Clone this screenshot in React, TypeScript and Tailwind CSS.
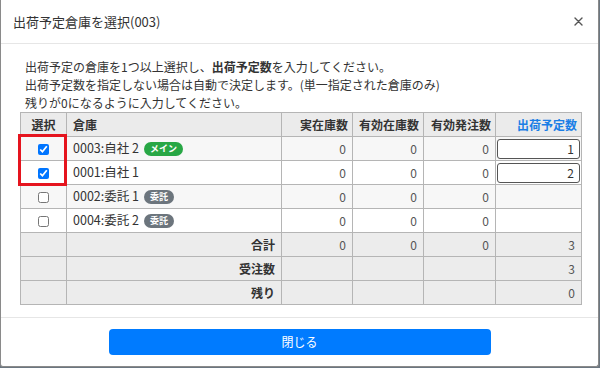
import React from "react";

type Row = {
  code: string;
  badge?: { label: string; color: string };
  checked: boolean;
  qty?: string;
};

const rows: Row[] = [
  { code: "0003:自社 2", badge: { label: "メイン", color: "bg-[#28a745]" }, checked: true, qty: "1" },
  { code: "0001:自社 1", checked: true, qty: "2" },
  { code: "0002:委託 1", badge: { label: "委託", color: "bg-[#6c757d]" }, checked: false },
  { code: "0004:委託 2", badge: { label: "委託", color: "bg-[#6c757d]" }, checked: false },
];

const cell = "h-[24px] border border-[#b5b5b5] px-[6px] py-0 whitespace-nowrap";

const App = () => {
  return (
    <div
      className="w-[600px] h-[368px] bg-[#6b7680] overflow-hidden"
      style={{ fontFamily: '"Noto Sans CJK JP", "Noto Sans", sans-serif' }}
    >
      <div className="w-[599px] h-[367px] bg-white border-l border-r border-b border-[#8a8a8a] rounded-b-[3px] flex flex-col text-[#333]">
        <div className="h-[44px] shrink-0 flex items-center justify-between pl-[12px] pr-[15px] border-b border-[#e6e6e6]">
          <span className="text-[13px] leading-none">出荷予定倉庫を選択(003)</span>
          <svg width="9" height="9" viewBox="0 0 9 9" className="text-[#555]">
            <path d="M1 1L8 8M8 1L1 8" stroke="currentColor" strokeWidth="1.4" strokeLinecap="round" />
          </svg>
        </div>

        <div className="px-[19px] pt-[14px] pb-[12px] border-b border-[#e6e6e6]">
          <div className="pl-[5px] text-[12px] leading-[18px]">
            <p>
              出荷予定の倉庫を1つ以上選択し、<span className="font-bold">出荷予定数</span>を入力してください。
            </p>
            <p>出荷予定数を指定しない場合は自動で決定します。(単一指定された倉庫のみ)</p>
            <p>残りが0になるように入力してください。</p>
          </div>

          <div className="relative w-[562px]">
            <table className="w-full table-fixed border-collapse border border-[#666] text-[12px] leading-none">
              <colgroup>
                <col className="w-[46px]" />
                <col className="w-[215px]" />
                <col className="w-[71px]" />
                <col className="w-[71px]" />
                <col className="w-[72px]" />
                <col />
              </colgroup>
              <thead>
                <tr className="bg-[#ebebeb] font-bold">
                  <th className={`${cell} text-center`}>選択</th>
                  <th className={`${cell} text-left`}>倉庫</th>
                  <th className={`${cell} !px-[4px] text-right`}>実在庫数</th>
                  <th className={`${cell} !px-[4px] text-right`}>有効在庫数</th>
                  <th className={`${cell} !px-[4px] text-right`}>有効発注数</th>
                  <th className={`${cell} !px-[4px] text-right text-[#1a7ee6]`}>出荷予定数</th>
                </tr>
              </thead>
              <tbody>
                {rows.map((r, i) => (
                  <tr key={r.code} className={i % 2 === 0 ? "bg-[#f7f7f7]" : "bg-white"}>
                    <td className={`${cell} text-center`}>
                      <input
                        type="checkbox"
                        defaultChecked={r.checked}
                        className="w-[11px] h-[11px] m-0 align-middle"
                      />
                    </td>
                    <td className={cell}>
                      <span className="flex items-center gap-[5px] text-[12.5px]">
                        {r.code}
                        {r.badge && (
                          <span
                            className={`${r.badge.color} text-white text-[9px] font-bold rounded-full px-[6px] h-[14px] flex items-center`}
                          >
                            {r.badge.label}
                          </span>
                        )}
                      </span>
                    </td>
                    <td className={`${cell} text-right text-[#555]`}>0</td>
                    <td className={`${cell} text-right text-[#555]`}>0</td>
                    <td className={`${cell} text-right text-[#555]`}>0</td>
                    <td className={`${cell} !px-[1px]`}>
                      {r.qty && (
                        <div className="h-[20px] border border-[#555] rounded-[3px] bg-white flex items-center justify-end pr-[5px] text-[#333]">
                          {r.qty}
                        </div>
                      )}
                    </td>
                  </tr>
                ))}
                {[
                  { label: "合計", vals: ["0", "0", "0", "3"] },
                  { label: "受注数", vals: ["", "", "", "3"] },
                  { label: "残り", vals: ["", "", "", "0"] },
                ].map((f) => (
                  <tr key={f.label} className="bg-[#ececec]">
                    <td className={cell}></td>
                    <td className={`${cell} text-right font-bold`}>{f.label}</td>
                    {f.vals.map((v, j) => (
                      <td key={j} className={`${cell} text-right text-[#555]`}>
                        {v}
                      </td>
                    ))}
                  </tr>
                ))}
              </tbody>
            </table>
            <div className="absolute left-[-2px] top-[22px] w-[49px] h-[52px] border-[3px] border-[#e5141e] pointer-events-none" />
          </div>
        </div>

        <div className="flex-1 flex items-center justify-center">
          <button className="w-[382px] h-[26px] bg-[#007bff] text-white text-[12px] rounded-[4px]">
            閉じる
          </button>
        </div>
      </div>
    </div>
  );
};

export default App;
